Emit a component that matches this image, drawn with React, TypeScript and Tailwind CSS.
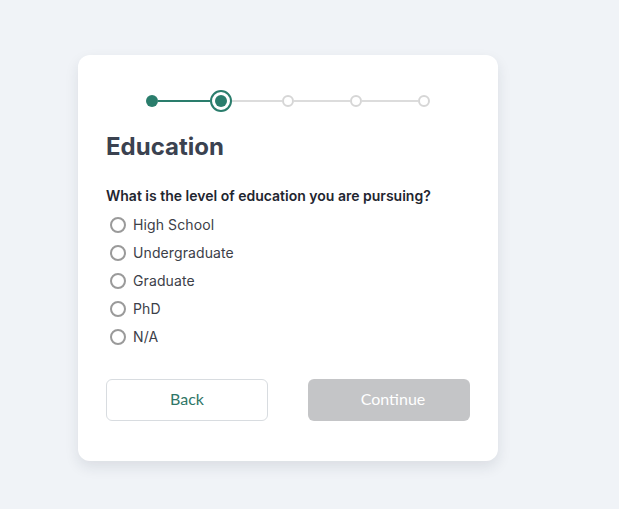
import React from "react";

export default function App() {
  const options = ["High School", "Undergraduate", "Graduate", "PhD", "N/A"];
  return (
    <div className="min-h-[509px] w-[619px] bg-[#f0f3f7] pt-[55px] pl-[78px]" style={{ fontFamily: "Inter, 'Noto Sans', sans-serif" }}>
      <div className="w-[420px] rounded-[12px] bg-white px-7 pt-[35px] pb-[40px] shadow-[0_6px_14px_rgba(30,40,60,0.10)]">
        <div className="flex items-center justify-center">
          <div className="h-3 w-3 rounded-full bg-[#2a7d6c]" />
          <div className="h-[2px] w-[52px] bg-[#2a7d6c]" />
          <div className="flex h-[22px] w-[22px] items-center justify-center rounded-full border-2 border-[#2a7d6c] bg-white">
            <div className="h-3 w-3 rounded-full bg-[#2a7d6c]" />
          </div>
          <div className="h-[2px] w-[50px] bg-[#dcdcdc]" />
          <div className="h-3 w-3 rounded-full border-2 border-[#d6d6d6] bg-white" />
          <div className="h-[2px] w-[56px] bg-[#dcdcdc]" />
          <div className="h-3 w-3 rounded-full border-2 border-[#d6d6d6] bg-white" />
          <div className="h-[2px] w-[56px] bg-[#dcdcdc]" />
          <div className="h-3 w-3 rounded-full border-2 border-[#d6d6d6] bg-white" />
        </div>
        <h1 className="mt-[19px] text-[24px] leading-[32px] font-bold text-[#3b4250]">Education</h1>
        <p className="mt-[23px] text-[14px] leading-[20px] font-semibold text-[#1f2630]">
          What is the level of education you are pursuing?
        </p>
        <div className="mt-[5px] flex flex-col">
          {options.map((o) => (
            <label key={o} className="flex h-[28px] items-center gap-[7px] pl-[4px]">
              <span className="h-[16px] w-[16px] rounded-full border-2 border-[#9a9a9a] bg-white" />
              <span className="text-[14px] leading-[20px] tracking-[0.1px] text-[#3c4048]">{o}</span>
            </label>
          ))}
        </div>
        <div className="mt-[28px] flex justify-between">
          <button className="h-[42px] w-[162px] rounded-[6px] border border-[#d8dce0] bg-white pb-[2px] text-[16px] text-[#2f7667]" style={{ fontFamily: "Lato, 'Open Sans', sans-serif" }}>
            Back
          </button>
          <button className="h-[42px] w-[162px] rounded-[6px] bg-[#c4c5c7] pb-[2px] pl-[8px] text-[16px] text-white" style={{ fontFamily: "Lato, 'Open Sans', sans-serif" }}>
            Continue
          </button>
        </div>
      </div>
    </div>
  );
}
